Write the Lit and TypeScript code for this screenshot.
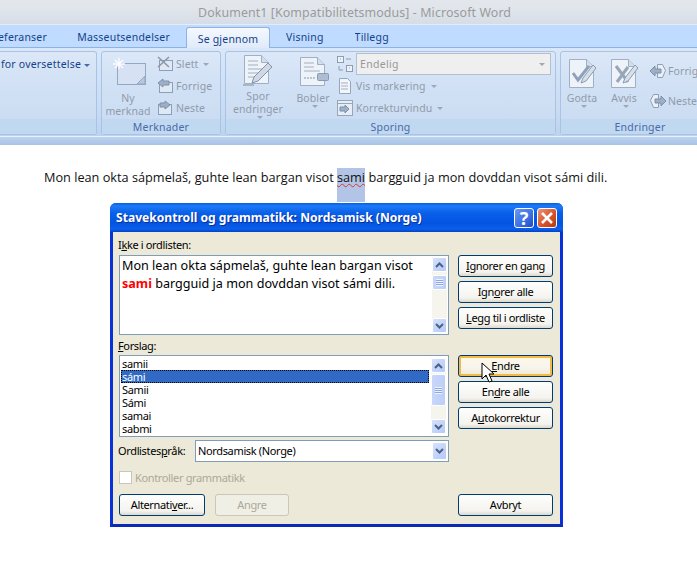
import { LitElement, html, css, svg } from 'lit';
import { customElement } from 'lit/decorators.js';

const doc = svg`<path d="M2.5 2.5h17l7 7v21h-24z" fill="#eef3fa" stroke="#9fb0c6"/><path d="M19.5 2.5v7h7" fill="#d3deec" stroke="#9fb0c6"/>`;
const lines = svg`<path d="M6 8h10M6 12h10M6 16h16M6 20h11M6 24h8" stroke="#a3afbf" fill="none"/>`;

const icons = {
  comment: svg`<svg width="36" height="30" viewBox="0 0 36 30"><rect x="4.5" y="5.5" width="28" height="21" fill="#d6e2f3" stroke="#95a8c2"/><path d="M24 26l8-8v8z" fill="#b7c7dc" stroke="#95a8c2"/><path d="M6 0v11M0 6h12M2 2l8 8M10 2l-8 8" stroke="#fbfdff" stroke-width="1.4"/></svg>`,
  del: svg`<svg width="17" height="16" viewBox="0 0 17 16"><rect x="2.5" y="4.5" width="13" height="10" fill="#dfe8f5" stroke="#8d9fb8"/><path d="M1 1l11 10M12 1L1 11" stroke="#8d97a6" stroke-width="1.6"/></svg>`,
  prev: svg`<svg width="17" height="16" viewBox="0 0 17 16"><rect x="2.5" y="4.5" width="13" height="10" fill="#dfe8f5" stroke="#8d9fb8"/><path d="M1 5l5-4v2h6v4H6v2z" fill="#9db0c8" stroke="#7f90a8"/></svg>`,
  next: svg`<svg width="17" height="16" viewBox="0 0 17 16"><rect x="1.5" y="4.5" width="13" height="10" fill="#dfe8f5" stroke="#8d9fb8"/><path d="M13 5L8 1v2H3v4h5v2z" fill="#9db0c8" stroke="#7f90a8"/></svg>`,
  track: svg`<svg width="32" height="33" viewBox="0 0 32 33"><g>${doc}${lines}</g><path d="M10 30l2-6L26 10l4 4-14 14z" fill="#cfd8e4" stroke="#8494a8"/><path d="M1 32h11" stroke="#7f8da0"/></svg>`,
  balloon: svg`<svg width="31" height="33" viewBox="0 0 31 33"><g>${doc}<path d="M6 8h10M6 12h10M6 16h16" stroke="#a3afbf"/><path d="M6 23h12" stroke="#8895a8" stroke-dasharray="2 1"/></g><rect x="19.5" y="18.5" width="11" height="7" rx="1" fill="#aebdd1" stroke="#8a9ab0"/></svg>`,
  sm1: svg`<svg width="16" height="16" viewBox="0 0 16 16"><rect x=".5" y=".5" width="6" height="6" fill="#eef3fa" stroke="#8c9cb2"/><rect x="9.5" y="9.5" width="6" height="6" fill="#eef3fa" stroke="#8c9cb2"/><path d="M3 3h1M12 12h1M9 3h5M2 10v4h4" stroke="#8c9cb2" fill="none"/></svg>`,
  sm2: svg`<svg width="16" height="16" viewBox="0 0 16 16"><path d="M2.5.5h8l3 3v12h-11z" fill="#f2f6fb" stroke="#96a6bb"/><path d="M4 5h7M4 8h7M4 11h7" stroke="#a3afbf"/></svg>`,
  sm3: svg`<svg width="16" height="16" viewBox="0 0 16 16"><rect x=".5" y=".5" width="15" height="15" fill="#e6edf7" stroke="#96a6bb"/><path d="M.5 3.5h15" stroke="#96a6bb"/><path d="M3 7h5V5l4 4-4 4v-2H3z" fill="#9db0c8" stroke="#7f90a8"/></svg>`,
  accept: svg`<svg width="31" height="31" viewBox="0 0 31 31"><g>${doc}</g><path d="M6 16l5 7L22 9" fill="none" stroke="#8fa1b8" stroke-width="3"/><path d="M14 26l2-5L26 8l3 3-10 13z" fill="#d7dfea" stroke="#8b9bb0"/></svg>`,
  reject: svg`<svg width="31" height="31" viewBox="0 0 31 31"><g>${doc}</g><path d="M7 9l12 16M19 10L8 25" fill="none" stroke="#98a6b8" stroke-width="3"/><path d="M14 26l2-5L26 8l3 3-10 13z" fill="#d7dfea" stroke="#8b9bb0"/></svg>`,
  changePrev: svg`<svg width="18" height="16" viewBox="0 0 18 16"><path d="M8.5 1.5h5l3 6-3 7h-5z" fill="#eaf0f8" stroke="#8f9fb5"/><path d="M1 8l5-5v3h6v4H6v3z" fill="#9db0c8" stroke="#7f90a8"/></svg>`,
  changeNext: svg`<svg width="18" height="16" viewBox="0 0 18 16"><path d="M9.5 1.5h-5l-3 6 3 7h5z" fill="#eaf0f8" stroke="#8f9fb5"/><path d="M17 8l-5-5v3H6v4h6v3z" fill="#9db0c8" stroke="#7f90a8"/></svg>`,
};

@customElement('app-root')
export class AppRoot extends LitElement {
  static styles = css`
    :host {
      display: block;
      width: 697px;
      height: 568px;
      overflow: hidden;
      background: #fff;
      font-family: 'Noto Sans', sans-serif;
      font-size: 11px;
      position: relative;
    }
    .titlebar {
      height: 25px;
      box-sizing: border-box;
      background: linear-gradient(#e3e7ec, #dfe5eb 40%, #d6dde6);
      border-bottom: 1px solid #e9edf2;
      color: #9b9b9b;
      font-size: 12.4px;
      display: flex;
      align-items: center;
      padding-left: 198px;
      letter-spacing: 0.1px;
    }
    .tabs {
      height: 23px;
      background: #bfdbff;
      display: flex;
      align-items: flex-end;
      color: #15428b;
      font-size: 10.5px;
      letter-spacing: 0.2px;
      border-bottom: 1px solid #8db2e3;
      box-sizing: border-box;
    }
    .tab {
      height: 21px;
      box-sizing: border-box;
      padding-top: 1px;
      display: flex;
      align-items: center;
      justify-content: flex-end;
      white-space: nowrap;
      overflow: hidden;
    }
    .tab.ref { width: 47px; }
    .tab.mail { margin-left: 30px; width: 93px; }
    .tab.active {
      width: 84px;
      margin: 0 0 -1px 16px;
      background: linear-gradient(#f5f9fe, #dfeafa);
      border: 1px solid #8db2e3;
      border-bottom: none;
      border-radius: 3px 3px 0 0;
      justify-content: center;
    }
    .tab.view { margin-left: 16px; }
    .tab.extra { margin-left: 31px; }
    .ribbon {
      height: 89px;
      box-sizing: border-box;
      padding: 3px 0 1px;
      display: flex;
      gap: 4px;
      background: linear-gradient(#d9e7f9, #c9dcf3 70%, #bcd3ef);
      border-bottom: 1px solid #e8f0fa;
      overflow: hidden;
      color: #8f9bab;
      font-size: 10.5px;
    }
    .group {
      flex: none;
      display: flex;
      flex-direction: column;
      box-sizing: border-box;
      border: 1px solid #a9c3e4;
      border-radius: 3px;
      background: linear-gradient(#dce8f8, #d3e2f5 30%, #c9dbf2);
    }
    .group.first { width: 97px; border-left: none; border-radius: 0 3px 3px 0; }
    .group.notes { width: 120px; }
    .group.track { width: 331px; }
    .group.changes { width: 160px; }
    .content {
      flex: 1;
      display: flex;
      min-height: 0;
    }
    .label {
      height: 15px;
      flex: none;
      box-sizing: border-box;
      padding-top: 1px;
      background: #c1d8f1;
      color: #4a6aa8;
      text-align: center;
      line-height: 15px;
      letter-spacing: 0.2px;
    }
    .for {
      color: #15428b;
      padding: 5px 0 0 1px;
      letter-spacing: 0.2px;
      white-space: nowrap;
    }
    .big {
      display: flex;
      flex-direction: column;
      align-items: center;
      line-height: 13px;
      flex: none;
      text-align: center;
      letter-spacing: 0.1px;
    }
    .big svg { display: block; }
    .big .slot {
      height: 36px;
      display: flex;
      align-items: flex-end;
      margin-bottom: 4px;
    }
    .big.ny { width: 50px; margin-left: 1px; }
    .big.ny .slot { padding-left: 6px; }
    .big.spor { width: 60px; margin-left: 2px; }
    .big.bob { width: 36px; margin-left: 7px; }
    .big.god { width: 36px; margin-left: 3px; }
    .big.avv { width: 34px; margin-left: 7px; }
    .smalls {
      display: flex;
      flex-direction: column;
      padding-top: 1px;
      margin-left: 4px;
    }
    .row {
      height: 22px;
      display: flex;
      align-items: center;
      gap: 2px;
      white-space: nowrap;
      letter-spacing: 0.1px;
    }
    .row svg { display: block; flex: none; }
    .caret {
      display: inline-block;
      width: 0;
      height: 0;
      border: 3px solid transparent;
      border-top: 3px solid #9aa8ba;
      border-bottom: none;
      margin-left: 3px;
      vertical-align: middle;
    }
    .caret.dark { border-top-color: #4a6aa8; }
    .track-icons {
      display: flex;
      flex-direction: column;
      gap: 6px;
      margin-left: 6px;
      padding-top: 4px;
    }
    .track-icons svg { display: block; }
    .track-rows {
      margin-left: 3px;
      padding-top: 1px;
      display: flex;
      flex-direction: column;
    }
    .combo {
      width: 195px;
      height: 22px;
      box-sizing: border-box;
      border: 1px solid #b2bfd0;
      background: #efefef;
      display: flex;
      align-items: center;
      justify-content: space-between;
      padding: 0 5px 0 3px;
      color: #999;
      letter-spacing: 0.3px;
    }
    .changes .smalls { padding-top: 8px; margin-left: 8px; gap: 8px; }
    .changes .row { gap: 1px; }
    .band {
      height: 8px;
      background: linear-gradient(#bcd2ee, #a7c3e8);
    }
    .para {
      height: 35px;
      box-sizing: border-box;
      padding: 23px 0 0 44px;
      font-family: 'Open Sans', sans-serif;
      font-size: 12.72px;
      color: #111;
      white-space: nowrap;
      display: flex;
      align-items: flex-start;
      overflow: visible;
    }
    .para span { white-space: pre; line-height: 18px; }
    .para .sel {
      flex: none;
      height: 34px;
      background: #b3c5e6;
      text-decoration: underline wavy #d9362e 1px;
      text-underline-offset: 1px;
    }
    .doc {
      height: 58px;
    }
    .dialog {
      width: 453px;
      height: 324px;
      box-sizing: border-box;
      margin-left: 110px;
      display: flex;
      flex-direction: column;
      border-radius: 6px 6px 0 0;
      background: #ece9d8;
      border: 3px solid #0831d9;
      border-top: none;
      border-bottom-color: #0a2ab5;
      font-size: 11px;
      letter-spacing: -0.35px;
      color: #000;
    }
    .dlg-title {
      height: 29px;
      flex: none;
      margin: 0 -3px;
      border-radius: 6px 6px 0 0;
      background: linear-gradient(#0a5be6, #1c7cf6 10%, #0a5fe8 35%, #0354e2 70%, #0a5fea 90%, #0340c8);
      display: flex;
      align-items: center;
      padding: 0 6px;
      color: #fff;
      font-weight: bold;
      font-size: 12.1px;
      letter-spacing: 0;
      gap: 3px;
      text-shadow: 1px 1px 0 #0a2f9a;
    }
    .dlg-title .name { flex: 1; white-space: nowrap; }
    .winbtn {
      width: 20px;
      height: 20px;
      box-sizing: border-box;
      border: 1px solid #fff;
      border-radius: 3px;
      background: linear-gradient(135deg, #6a98f2, #3a6ee2 60%, #1f4cc0);
      color: #fff;
      display: flex;
      align-items: center;
      justify-content: center;
      font-size: 18px;
      font-weight: bold;
      line-height: 18px;
      text-shadow: none;
    }
    .winbtn.close { background: linear-gradient(135deg, #eb9477, #d9532c 55%, #b8380f); }
    .winbtn svg { display: block; }
    .dlg-body {
      flex: 1;
      display: grid;
      grid-template-columns: 330px 95px;
      column-gap: 9px;
      padding: 0 0 8px 6px;
      min-height: 0;
    }
    .left, .right { display: flex; flex-direction: column; min-height: 0; }
    .right { padding-top: 23px; }
    .cap {
      height: 20px;
      display: flex;
      align-items: flex-end;
      padding-bottom: 2px;
      box-sizing: border-box;
      margin-left: -1px;
    }
    .cap.top { height: 23px; padding-bottom: 3px; }
    .box {
      box-sizing: border-box;
      border: 1px solid #7f9db9;
      background: #fff;
      display: flex;
      flex: none;
      padding: 1px;
    }
    .box .inner { flex: 1; min-width: 0; overflow: hidden; }
    .sentence { height: 80px; }
    .sentence .inner {
      padding: 0 0 0 1px;
      font-size: 12.6px;
      line-height: 18px;
      letter-spacing: 0;
    }
    .red { color: #f00; font-weight: bold; }
    .list { height: 82px; }
    .list .inner { padding: 0 2px 0 0; }
    .list .scroll { margin: 1px 1px 1px 0; }
    .item { height: 13px; line-height: 13px; padding-left: 1px; }
    .item.on {
      background: #316ac5;
      color: #fff;
      outline: 1px dotted #000;
      outline-offset: -1px;
    }
    .scroll {
      width: 15px;
      flex: none;
      display: flex;
      flex-direction: column;
      background: #f5f5ee;
      box-sizing: border-box;
    }
    .sb {
      width: 15px;
      height: 15px;
      flex: none;
      box-sizing: border-box;
      border: 1px solid #fff;
      border-radius: 2px;
      background: linear-gradient(135deg, #d6e2fb, #b3c9f7);
      display: flex;
      align-items: center;
      justify-content: center;
    }
    .sb svg { display: block; }
    .thumb {
      width: 15px;
      box-sizing: border-box;
      border: 1px solid #fff;
      border-radius: 2px;
      background: linear-gradient(90deg, #c8d7f9, #bccff8);
      display: flex;
      align-items: center;
      justify-content: center;
      flex: none;
    }
    .thumb.short { height: 15px; margin-top: 3px; }
    .thumb.long { height: 32px; margin-top: 1px; }
    .thumb i {
      display: block;
      width: 7px;
      height: 7px;
      background: repeating-linear-gradient(#eef3fe 0 1px, #8ba7e6 1px 2px);
    }
    .grow { flex: 1; }
    .lang {
      display: flex;
      align-items: center;
      margin-top: 3px;
      height: 22px;
      margin-left: -1px;
    }
    .lang .lb { width: 77px; flex: none; padding-bottom: 2px; }
    .langbox {
      width: 254px;
      height: 22px;
      align-items: center;
      padding: 0 1px 0 2px;
    }
    .langbox .inner { padding-bottom: 2px; }
    .langbox .sb { width: 15px; height: 18px; }
    .check {
      display: flex;
      align-items: center;
      gap: 3px;
      height: 13px;
      margin-top: 9px;
      color: #aca899;
    }
    .check i {
      display: block;
      width: 13px;
      height: 13px;
      box-sizing: border-box;
      background: #fff;
      border: 1px solid #c9c7ba;
    }
    .foot {
      display: flex;
      margin-top: auto;
      gap: 10px;
    }
    .btn {
      box-sizing: border-box;
      height: 22px;
      width: 95px;
      flex: none;
      padding-bottom: 1px;
      border: 1px solid #003c74;
      border-radius: 3px;
      background: linear-gradient(#fefefd, #f4f3ee 80%, #dcd8cc);
      display: flex;
      align-items: center;
      justify-content: center;
      white-space: pre;
      color: #000;
    }
    .stack { display: flex; flex-direction: column; gap: 4px; }
    .stack.second { margin-top: 26px; }
    .btn.hot {
      box-shadow: inset 0 0 0 2px #f5b946;
      background: linear-gradient(#fff8e8, #f6f4ec 60%, #eee6cf);
    }
    .btn.alt { width: 86px; }
    .btn.off {
      width: 74px;
      border-color: #c9c7ba;
      background: #f0efe6;
      color: #aca899;
    }
    .right .btn.cancel { margin-top: auto; }
    u { text-underline-offset: 1px; }
    .cursor { position: absolute; left: 481px; top: 362px; display: block; }
  `;

  private scrollbar(thumb: string) {
    return html`<div class="scroll">
      <div class="sb">${this.chev(true)}</div>
      <div class="thumb ${thumb}"><i></i></div>
      <div class="grow"></div>
      <div class="sb">${this.chev(false)}</div>
    </div>`;
  }

  private chev(up: boolean) {
    return html`<svg width="9" height="6" viewBox="0 0 9 6"><path d=${up ? 'M1 5l3.5-3.5L8 5' : 'M1 1l3.5 3.5L8 1'} fill="none" stroke="#4d6185" stroke-width="2"/></svg>`;
  }

  render() {
    return html`
      <div class="titlebar">Dokument1 [Kompatibilitetsmodus] - Microsoft Word</div>
      <div class="tabs">
        <div class="tab ref">Referanser</div>
        <div class="tab mail">Masseutsendelser</div>
        <div class="tab active">Se gjennom</div>
        <div class="tab view">Visning</div>
        <div class="tab extra">Tillegg</div>
      </div>
      <div class="ribbon">
        <div class="group first">
          <div class="content"><div class="for">for oversettelse<span class="caret dark"></span></div></div>
          <div class="label"></div>
        </div>
        <div class="group notes">
          <div class="content">
            <div class="big ny"><div class="slot">${icons.comment}</div>Ny<br />merknad</div>
            <div class="smalls">
              <div class="row">${icons.del}Slett<span class="caret"></span></div>
              <div class="row">${icons.prev}Forrige</div>
              <div class="row">${icons.next}Neste</div>
            </div>
          </div>
          <div class="label">Merknader</div>
        </div>
        <div class="group track">
          <div class="content">
            <div class="big spor"><div class="slot">${icons.track}</div>Spor<br />endringer<span class="caret"></span></div>
            <div class="big bob"><div class="slot">${icons.balloon}</div>Bobler<br /><span class="caret"></span></div>
            <div class="track-icons">${icons.sm1}${icons.sm2}${icons.sm3}</div>
            <div class="track-rows">
              <div class="combo">Endelig<span class="caret"></span></div>
              <div class="row">Vis markering<span class="caret"></span></div>
              <div class="row">Korrekturvindu<span class="caret"></span></div>
            </div>
          </div>
          <div class="label">Sporing</div>
        </div>
        <div class="group changes">
          <div class="content">
            <div class="big god"><div class="slot">${icons.accept}</div>Godta<br /><span class="caret"></span></div>
            <div class="big avv"><div class="slot">${icons.reject}</div>Avvis<br /><span class="caret"></span></div>
            <div class="smalls">
              <div class="row">${icons.changePrev}Forrige</div>
              <div class="row">${icons.changeNext}Neste</div>
            </div>
          </div>
          <div class="label">Endringer</div>
        </div>
      </div>
      <div class="band"></div>
      <div class="doc">
        <div class="para">
          <span>Mon lean okta sápmelaš, guhte lean bargan visot </span><span class="sel">sami</span><span> bargguid ja mon dovddan visot sámi dili.</span>
        </div>
      </div>
      <div class="dialog">
        <div class="dlg-title">
          <span class="name">Stavekontroll og grammatikk: Nordsamisk (Norge)</span>
          <span class="winbtn">?</span>
          <span class="winbtn close"><svg width="14" height="14" viewBox="0 0 14 14"><path d="M2 2l10 10M12 2L2 12" stroke="#fff" stroke-width="2.6"/></svg></span>
        </div>
        <div class="dlg-body">
          <div class="left">
            <div class="cap top"><span>I<u>k</u>ke i ordlisten:</span></div>
            <div class="box sentence">
              <div class="inner">Mon lean okta sápmelaš, guhte lean bargan visot<br /><span class="red">sami</span> bargguid ja mon dovddan visot sámi dili.</div>
              ${this.scrollbar('short')}
            </div>
            <div class="cap"><span><u>F</u>orslag:</span></div>
            <div class="box list">
              <div class="inner">
                <div class="item">samii</div>
                <div class="item on">sámi</div>
                <div class="item">Samii</div>
                <div class="item">Sámi</div>
                <div class="item">samai</div>
                <div class="item">sabmi</div>
              </div>
              ${this.scrollbar('long')}
            </div>
            <div class="lang">
              <span class="lb">Ordlistes<u>p</u>råk:</span>
              <div class="box langbox">
                <div class="inner">Nordsamisk (Norge)</div>
                <div class="sb">${this.chev(false)}</div>
              </div>
            </div>
            <div class="check"><i></i>Kontroller grammatikk</div>
            <div class="foot">
              <div class="btn alt">Alternati<u>v</u>er...</div>
              <div class="btn off">Angre</div>
            </div>
          </div>
          <div class="right">
            <div class="stack">
              <div class="btn"><span><u>I</u>gnorer en gang</span></div>
              <div class="btn"><span>Ign<u>o</u>rer alle</span></div>
              <div class="btn"><span><u>L</u>egg til i ordliste</span></div>
            </div>
            <div class="stack second">
              <div class="btn hot"><span><u>E</u>ndre</span></div>
              <div class="btn"><span>En<u>d</u>re alle</span></div>
              <div class="btn"><span>A<u>u</u>tokorrektur</span></div>
            </div>
            <div class="btn cancel">Avbryt</div>
          </div>
        </div>
      </div>
      <svg class="cursor" width="14" height="22" viewBox="0 0 14 22"><path d="M1 1v16l4-4 3 7 3-1-3-7h5z" fill="#fff" stroke="#000"/></svg>
    `;
  }
}
